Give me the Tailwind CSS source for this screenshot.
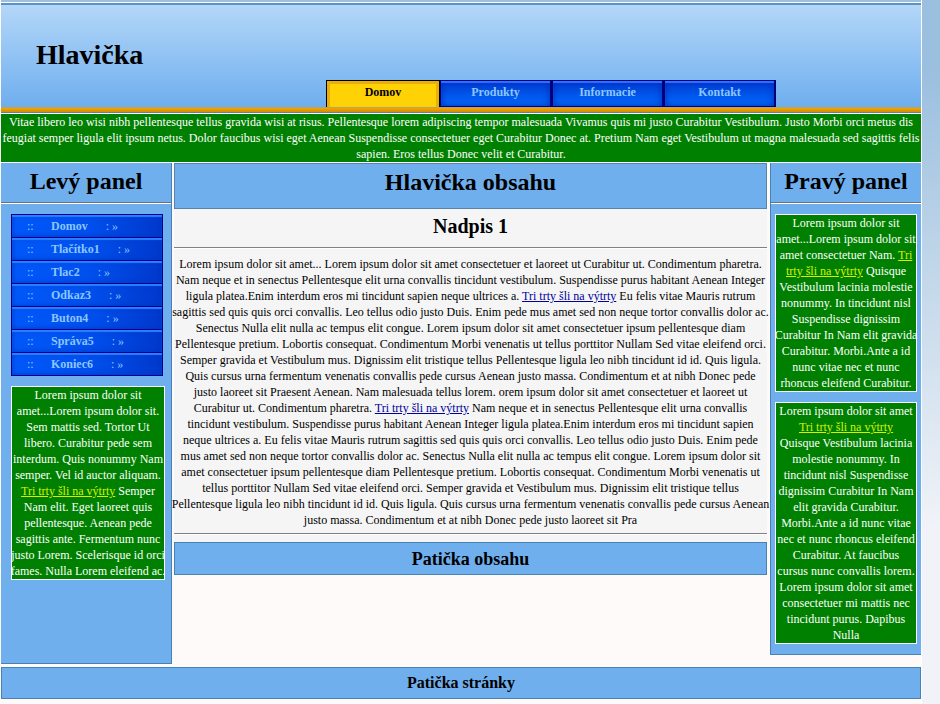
<!DOCTYPE html>
<html lang="sk">
<head>
<meta charset="utf-8">
<meta name="viewport" content="width=device-width, initial-scale=1">
<title>Hlavička</title>
<script src="https://cdn.jsdelivr.net/npm/@tailwindcss/browser@4"></script>
</head>
<body class="min-h-screen bg-linear-to-b from-[#9bbfdf] from-10% via-[#c4d8ea] via-40% to-[#f1f3f8] to-75% font-['Liberation_Serif','Times_New_Roman',serif] text-[12px] leading-4 text-black">
<div class="mr-[18px] min-h-screen border-r border-white bg-[#fffafa] pl-px">
  <header class="border-t-2 border-[#9fbfdf]">
    <div class="border-t border-white">
      <div class="flex h-[104px] flex-col justify-between border-t-2 border-[#5b92c6] bg-linear-to-b from-[#b3d7f8] to-[#6eaeee]">
        <h1 class="pl-[35px] pt-8 text-[28px] font-bold leading-9">Hlavička</h1>
        <nav class="ml-[325px] grid w-[450px] grid-cols-[114px_1fr_1fr_1fr] text-center font-bold text-[#8cc6ff]">
          <a href="#" class="h-[27px] border-x border-t border-black bg-[#ffd205] pt-[3px] text-black shadow-[inset_3px_3px_0_#e9ae0b,inset_-3px_0_0_#e9ae0b]">Domov</a>
          <a href="#" class="h-[27px] border border-r-2 border-[#00007c] bg-linear-to-b from-[#0038d0] to-[#006cff] pt-[3px] shadow-[inset_0_2px_1px_#2c74ff,inset_0_0_7px_#0028b0]">Produkty</a>
          <a href="#" class="h-[27px] border border-r-2 border-[#00007c] bg-linear-to-b from-[#0038d0] to-[#006cff] pt-[3px] shadow-[inset_0_2px_1px_#2c74ff,inset_0_0_7px_#0028b0]">Informacie</a>
          <a href="#" class="h-[27px] border border-r-2 border-[#00007c] bg-linear-to-b from-[#0038d0] to-[#006cff] pt-[3px] shadow-[inset_0_2px_1px_#2c74ff,inset_0_0_7px_#0028b0]">Kontakt</a>
        </nav>
      </div>
      <div class="h-[6px] border-y border-b-[#6c7f90] border-t-[#b7a463] bg-linear-to-b from-[#f0a800] to-[#d28c08]"></div>
    </div>
  </header>
  <p class="border-y border-white bg-[#008000] text-center text-white">Vitae libero leo wisi nibh pellentesque tellus gravida wisi at risus. Pellentesque lorem adipiscing tempor malesuada Vivamus quis mi justo Curabitur Vestibulum. Justo Morbi orci metus dis<br>feugiat semper ligula elit ipsum netus. Dolor faucibus wisi eget Aenean Suspendisse consectetuer eget Curabitur Donec at. Pretium Nam eget Vestibulum ut magna malesuada sed sagittis felis<br>sapien. Eros tellus Donec velit et Curabitur.</p>

  <div class="flex items-start">
    <aside class="w-[171px] shrink-0 border-b border-r border-[#4682b4] bg-[#70afee] pb-[83px]">
      <h2 class="h-10 border-b border-gray-500 pt-1 text-center text-[24px] font-bold leading-7">Levý panel</h2>
      <div class="border-t border-white pl-[10px] pr-[6px] pt-[10px]">
        <ul class="mr-[2px] border-x border-b border-[#00008c] text-[#8cc6ff]">
          <li><a href="#" class="flex h-[23px] border-t border-[#00008c] bg-linear-to-r from-[#0058fa] via-[#0050ee] to-[#0038cc] pl-[15px] pt-[3px] shadow-[inset_0_2px_1px_#2c80ff,inset_0_0_5px_#0034c0]"><span class="w-6">::</span><b>Domov</b><span class="pl-[18px]">: »</span></a></li>
          <li><a href="#" class="flex h-[23px] border-t border-[#00008c] bg-linear-to-r from-[#0058fa] via-[#0050ee] to-[#0038cc] pl-[15px] pt-[3px] shadow-[inset_0_2px_1px_#2c80ff,inset_0_0_5px_#0034c0]"><span class="w-6">::</span><b>Tlačítko1</b><span class="pl-[18px]">: »</span></a></li>
          <li><a href="#" class="flex h-[23px] border-t border-[#00008c] bg-linear-to-r from-[#0058fa] via-[#0050ee] to-[#0038cc] pl-[15px] pt-[3px] shadow-[inset_0_2px_1px_#2c80ff,inset_0_0_5px_#0034c0]"><span class="w-6">::</span><b>Tlac2</b><span class="pl-[18px]">: »</span></a></li>
          <li><a href="#" class="flex h-[23px] border-t border-[#00008c] bg-linear-to-r from-[#0058fa] via-[#0050ee] to-[#0038cc] pl-[15px] pt-[3px] shadow-[inset_0_2px_1px_#2c80ff,inset_0_0_5px_#0034c0]"><span class="w-6">::</span><b>Odkaz3</b><span class="pl-[18px]">: »</span></a></li>
          <li><a href="#" class="flex h-[23px] border-t border-[#00008c] bg-linear-to-r from-[#0058fa] via-[#0050ee] to-[#0038cc] pl-[15px] pt-[3px] shadow-[inset_0_2px_1px_#2c80ff,inset_0_0_5px_#0034c0]"><span class="w-6">::</span><b>Buton4</b><span class="pl-[18px]">: »</span></a></li>
          <li><a href="#" class="flex h-[23px] border-t border-[#00008c] bg-linear-to-r from-[#0058fa] via-[#0050ee] to-[#0038cc] pl-[15px] pt-[3px] shadow-[inset_0_2px_1px_#2c80ff,inset_0_0_5px_#0034c0]"><span class="w-6">::</span><b>Správa5</b><span class="pl-[18px]">: »</span></a></li>
          <li><a href="#" class="flex h-[23px] border-t border-[#00008c] bg-linear-to-r from-[#0058fa] via-[#0050ee] to-[#0038cc] pl-[15px] pt-[3px] shadow-[inset_0_2px_1px_#2c80ff,inset_0_0_5px_#0034c0]"><span class="w-6">::</span><b>Koniec6</b><span class="pl-[18px]">: »</span></a></li>
        </ul>
        <div class="mt-[10px] border border-white bg-[#008000] text-center text-white">
          <p class="-mx-1 whitespace-nowrap">Lorem ipsum dolor sit<br>amet...Lorem ipsum dolor sit.<br>Sem mattis sed. Tortor Ut<br>libero. Curabitur pede sem<br>interdum. Quis nonummy Nam<br>semper. Vel id auctor aliquam.<br><a href="#" class="text-[#d8f000] underline">Tri trty šli na výtrty</a> Semper<br>Nam elit. Eget laoreet quis<br>pellentesque. Aenean pede<br>sagittis ante. Fermentum nunc<br>justo Lorem. Scelerisque id orci<br>fames. Nulla Lorem eleifend ac.</p>
        </div>
      </div>
    </aside>

    <main class="ml-[2px] mr-[3px] min-w-0 flex-1 bg-[#f5f5f5] text-center">
      <h2 class="h-[46px] border border-[#5a83ab] bg-[#70afee] pt-1 text-[24px] font-bold leading-7">Hlavička obsahu</h2>
      <h3 class="pt-[5px] text-[20px] font-bold leading-6">Nadpis 1</h3>
      <hr class="mb-[7px] mt-[9px] border-b border-b-white border-t-[#808086]">
      <p class="-mx-1 whitespace-nowrap">Lorem ipsum dolor sit amet... Lorem ipsum dolor sit amet consectetuer et laoreet ut Curabitur ut. Condimentum pharetra.<br>Nam neque et in senectus Pellentesque elit urna convallis tincidunt vestibulum. Suspendisse purus habitant Aenean Integer<br>ligula platea.Enim interdum eros mi tincidunt sapien neque ultrices a. <a href="#" class="text-[#00009c] underline">Tri trty šli na výtrty</a> Eu felis vitae Mauris rutrum<br>sagittis sed quis quis orci convallis. Leo tellus odio justo Duis. Enim pede mus amet sed non neque tortor convallis dolor ac.<br>Senectus Nulla elit nulla ac tempus elit congue. Lorem ipsum dolor sit amet consectetuer ipsum pellentesque diam<br>Pellentesque pretium. Lobortis consequat. Condimentum Morbi venenatis ut tellus porttitor Nullam Sed vitae eleifend orci.<br>Semper gravida et Vestibulum mus. Dignissim elit tristique tellus Pellentesque ligula leo nibh tincidunt id id. Quis ligula.<br>Quis cursus urna fermentum venenatis convallis pede cursus Aenean justo massa. Condimentum et at nibh Donec pede<br>justo laoreet sit Praesent Aenean. Nam malesuada tellus lorem. orem ipsum dolor sit amet consectetuer et laoreet ut<br>Curabitur ut. Condimentum pharetra. <a href="#" class="text-[#00009c] underline">Tri trty šli na výtrty</a> Nam neque et in senectus Pellentesque elit urna convallis<br>tincidunt vestibulum. Suspendisse purus habitant Aenean Integer ligula platea.Enim interdum eros mi tincidunt sapien<br>neque ultrices a. Eu felis vitae Mauris rutrum sagittis sed quis quis orci convallis. Leo tellus odio justo Duis. Enim pede<br>mus amet sed non neque tortor convallis dolor ac. Senectus Nulla elit nulla ac tempus elit congue. Lorem ipsum dolor sit<br>amet consectetuer ipsum pellentesque diam Pellentesque pretium. Lobortis consequat. Condimentum Morbi venenatis ut<br>tellus porttitor Nullam Sed vitae eleifend orci. Semper gravida et Vestibulum mus. Dignissim elit tristique tellus<br>Pellentesque ligula leo nibh tincidunt id id. Quis ligula. Quis cursus urna fermentum venenatis convallis pede cursus Aenean<br>justo massa. Condimentum et at nibh Donec pede justo laoreet sit Pra</p>
      <hr class="mb-[7px] mt-[5px] border-b border-b-white border-t-[#808086]">
      <div class="h-[33px] border border-[#4682b4] bg-[#70afee] pt-1 text-[18px] font-bold leading-6">Patička obsahu</div>
    </main>

    <aside class="w-[151px] shrink-0 border-b border-l border-[#4682b4] bg-[#70afee] pb-[10px]">
      <h2 class="h-10 border-b border-gray-500 pt-1 text-center text-[24px] font-bold leading-7">Pravý panel</h2>
      <div class="flex flex-col gap-[10px] border-t border-white px-1 pt-[10px] text-center text-white">
        <div class="border border-white bg-[#008000]">
          <p class="-mx-1 whitespace-nowrap">Lorem ipsum dolor sit<br>amet...Lorem ipsum dolor sit<br>amet consectetuer Nam. <a href="#" class="text-[#d8f000] underline">Tri<br>trty šli na výtrty</a> Quisque<br>Vestibulum lacinia molestie<br>nonummy. In tincidunt nisl<br>Suspendisse dignissim<br>Curabitur In Nam elit gravida<br>Curabitur. Morbi.Ante a id<br>nunc vitae nec et nunc<br>rhoncus eleifend Curabitur.</p>
        </div>
        <div class="border border-white bg-[#008000]">
          <p class="-mx-1 whitespace-nowrap">Lorem ipsum dolor sit amet<br><a href="#" class="text-[#d8f000] underline">Tri trty šli na výtrty</a><br>Quisque Vestibulum lacinia<br>molestie nonummy. In<br>tincidunt nisl Suspendisse<br>dignissim Curabitur In Nam<br>elit gravida Curabitur.<br>Morbi.Ante a id nunc vitae<br>nec et nunc rhoncus eleifend<br>Curabitur. At faucibus<br>cursus nunc convallis lorem.<br>Lorem ipsum dolor sit amet<br>consectetuer mi mattis nec<br>tincidunt purus. Dapibus<br>Nulla</p>
        </div>
      </div>
    </aside>
  </div>
  <footer class="mt-[3px] h-8 border border-[#4682b4] bg-[#70afee] pt-[3px] text-center text-[16px] font-bold leading-6">Patička stránky</footer>
</div>
</body>
</html>
